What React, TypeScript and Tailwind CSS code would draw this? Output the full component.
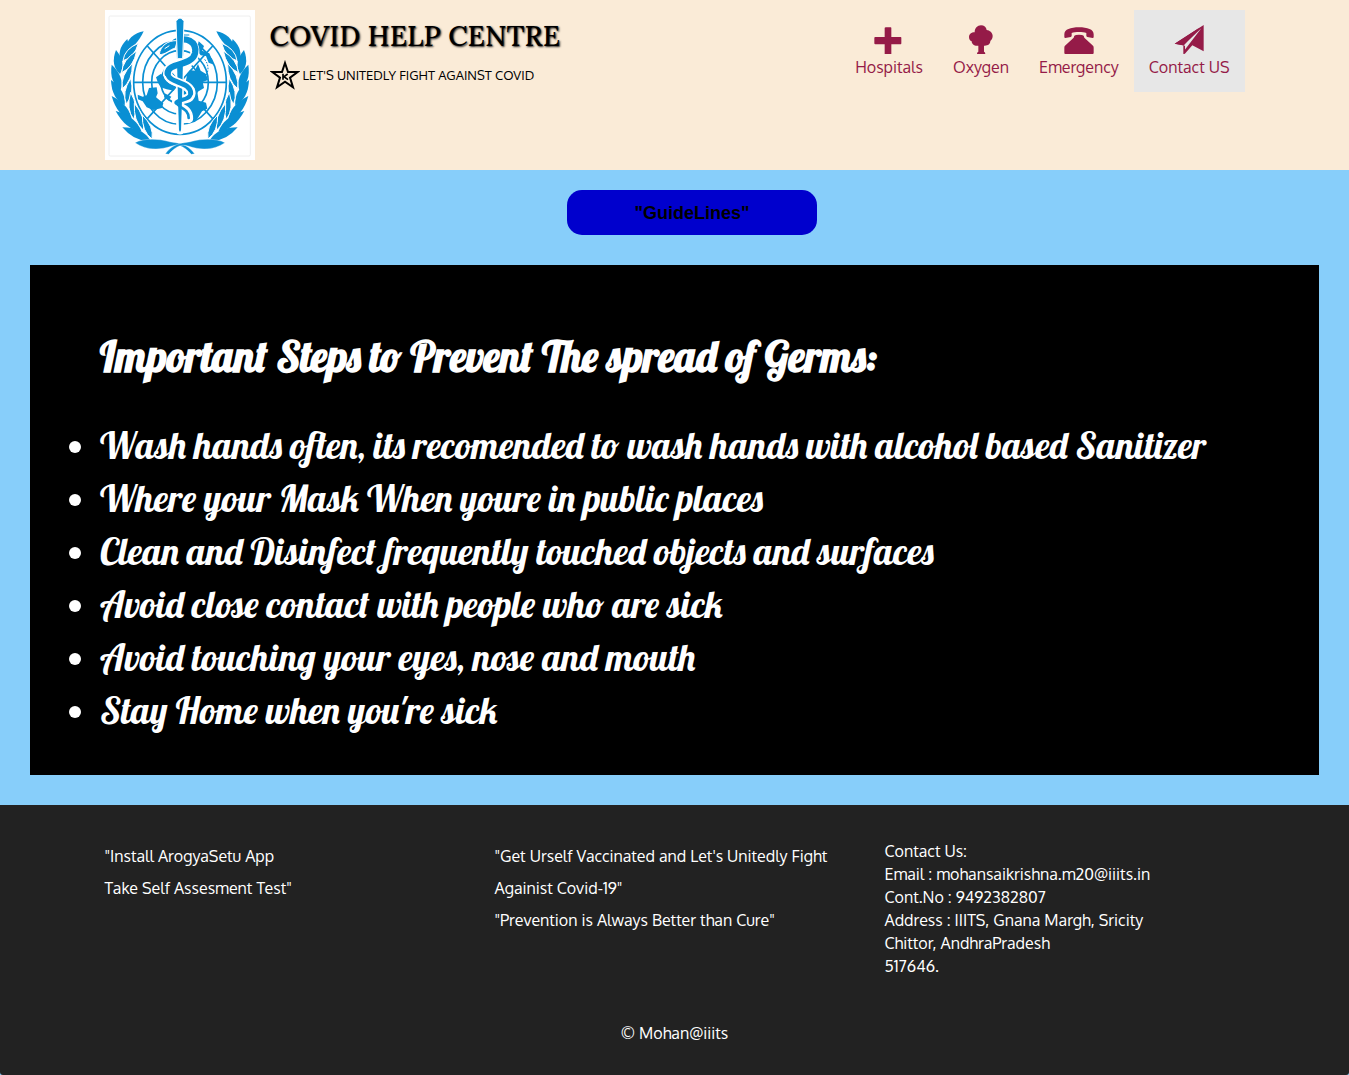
import type { ReactNode } from "react";

const BLUE = "#0a8fd3";

// Each pair of laurel leaves: stem point, outer tip, inner tip.
const LEAVES: number[][] = [
  [66, 186, 82, 117, 115, 130],
  [62, 222, 48, 150, 110, 153],
  [64, 270, 35, 194, 97, 190],
  [76, 316, 33, 240, 92, 235],
  [98, 362, 35, 288, 92, 277],
  [127, 395, 47, 333, 103, 310],
  [153, 421, 67, 382, 127, 345],
];

function leaf(x1: number, y1: number, x2: number, y2: number, w: number) {
  const dx = x2 - x1;
  const dy = y2 - y1;
  const l = Math.hypot(dx, dy);
  const mx = x1 + dx * 0.42;
  const my = y1 + dy * 0.42;
  const px = (-dy / l) * w;
  const py = (dx / l) * w;
  return `M${x1} ${y1}Q${mx + px} ${my + py} ${x2} ${y2}Q${mx - px} ${my - py} ${x1} ${y1}Z`;
}

function Laurel() {
  return (
    <g fill={BLUE}>
      <path d="M131 94C104 98 78 118 76 151C98 144 118 124 131 94Z" />
      {LEAVES.map(([x, y, ox, oy, ix, iy]) => (
        <g key={y}>
          <path d={leaf(x - 2, y, ox, oy, 25)} />
          <path d={leaf(x + 3, y - 4, ix, iy, 20)} stroke="#fff" strokeWidth="3" />
        </g>
      ))}
      <path d="M105 428C132 414 176 416 204 424C228 431 254 424 284 461L274 463C252 438 236 432 216 438C176 452 136 450 105 428Z" stroke="#fff" strokeWidth="1" />
    </g>
  );
}

function Emblem() {
  return (
    <svg viewBox="15 30 450 450" className="size-[150px] shrink-0 bg-white" role="img" aria-label="World Health Organization emblem">
      <rect x="27" y="48" width="424" height="420" rx="4" fill="none" stroke="#eeeeee" strokeWidth="3" />
      <g fill="none" stroke={BLUE} strokeWidth="5">
        <ellipse cx="240" cy="247" rx="139" ry="156" />
        <ellipse cx="240" cy="247" rx="112" ry="126" />
        <ellipse cx="240" cy="247" rx="85" ry="95" />
        <ellipse cx="240" cy="247" rx="57" ry="64" />
        <path d="M101 247H379M142 138L338 356M338 138L142 356" />
      </g>
      <g fill={BLUE}>
        <path d="M113 284L128 290L140 286L147 264L170 262L173 280L168 292L190 310L186 324L160 330L140 322L128 304L114 298Z" />
        <path d="M168 232L182 222L196 230L206 246L226 256L222 272L200 268L182 262L174 248Z" />
        <path d="M262 220L270 210L284 212L294 192L302 212L318 222L324 240L308 246L312 264L292 276L296 302L318 308L322 326L306 334L296 350L284 366L266 362L258 340L246 330L244 280L254 262Z" />
        <path d="M296 124L312 138L306 152L328 160L342 194L326 188L318 168L302 166L290 150Z" />
        <path d="M194 280L214 290L206 302L192 292Z" />
      </g>
      <path d="M314 178C328 196 326 214 316 232" fill="none" stroke={BLUE} strokeWidth="3" strokeDasharray="5 4" />
      <g fill="none" strokeLinecap="round">
        <path d="M215 134C252 104 290 124 284 162C278 206 204 184 203 220C203 252 274 246 273 280C272 306 229 292 229 310C230 326 266 320 266 356" stroke="#fff" strokeWidth="27" />
        <path d="M240 60V392" stroke="#fff" strokeWidth="23" />
      </g>
      <path d="M228 64Q240 44 252 64L246 300L243 390Q240 400 237 390L234 300Z" fill={BLUE} />
      <g fill="none" strokeLinecap="round">
        <path d="M252 180C226 190 203 196 203 220C203 252 273 244 273 280" stroke="#fff" strokeWidth="26" />
        <path d="M226 126C256 108 292 124 285 160C276 200 203 186 203 220" stroke={BLUE} strokeWidth="19" />
        <path d="M203 218C203 252 272 242 272 280" stroke={BLUE} strokeWidth="15" />
        <path d="M272 280C271 302 236 296 229 308" stroke={BLUE} strokeWidth="12" />
        <path d="M228 306C232 324 266 322 266 354" stroke={BLUE} strokeWidth="8" />
      </g>
      <path d="M178 164C180 138 204 120 232 122L226 144C210 148 198 164 178 164Z" fill={BLUE} stroke="#fff" strokeWidth="3" />
      <path d="M194 146L208 137" stroke="#fff" strokeWidth="3" />
      <path d="M228 64Q240 44 252 64L248 176H232Z" fill={BLUE} stroke="#fff" strokeWidth="3" />
      <path d="M252 105H268" stroke={BLUE} strokeWidth="3" />
      <Laurel />
      <g transform="matrix(-1 0 0 1 480 0)">
        <Laurel />
      </g>
    </svg>
  );
}

function StarMark() {
  return (
    <svg viewBox="0 0 90 90" className="size-[30px] shrink-0" aria-hidden="true">
      <path d="M45 9L54 36H83L60 53L69 82L45 65L21 82L30 53L7 36H36Z" fill="none" stroke="#000" strokeWidth="6" />
      <path d="M39 41V59M53 42L42 50L54 59" fill="none" stroke="#000" strokeWidth="5" />
    </svg>
  );
}

function NavLink({ label, active = false, children }: { label: string; active?: boolean; children: ReactNode }) {
  return (
    <a
      href="#"
      className={`flex flex-col items-center px-[15px] pt-[15px] pb-[13px] text-[16px] leading-[24px] text-[#951b48] ${active ? "bg-[#e7e7e7]" : ""}`}
    >
      <svg viewBox="0 0 90 90" className="size-[30px]" fill="currentColor" aria-hidden="true">
        {children}
      </svg>
      {label}
    </a>
  );
}

const STEPS = [
  "Wash hands often, its recomended to wash hands with alcohol based Sanitizer",
  "Where your Mask When youre in public places",
  "Clean and Disinfect frequently touched objects and surfaces",
  "Avoid close contact with people who are sick",
  "Avoid touching your eyes, nose and mouth",
  "Stay Home when you're sick",
];

export default function App() {
  return (
    <div className="bg-[#87cefa] font-['Oxygen','Open_Sans',sans-serif] text-[16px]">
      <header className="bg-[#faebd7] py-[10px]">
        <div className="mx-auto flex max-w-[1170px] items-start px-[15px]">
          <a href="#">
            <Emblem />
          </a>
          <div className="ml-[15px] pt-[8px]">
            <h1 className="font-['Lora','Liberation_Serif',serif] text-[28px] leading-[36px] font-medium text-black [text-shadow:1px_1px_2px_#222]">
              COVID HELP CENTRE
            </h1>
            <p className="mt-[6px] flex items-center gap-[3px] text-[13px] leading-[30px] text-black">
              <StarMark />
              LET'S UNITEDLY FIGHT AGAINST COVID
            </p>
          </div>
          <nav className="ml-auto flex">
            <NavLink label="Hospitals">
              <path d="M36 7H50Q52 7 52 9V36H80Q82 36 82 38V55Q82 58 80 58H52V87H32V58H4Q1 58 1 55V38Q1 36 4 36H32V9Q32 7 36 7Z" />
            </NavLink>
            <NavLink label="Oxygen">
              <path d="M45 1C54 1 61 7 62 15C71 16 80 23 80 33C80 40 77 45 73 48C73 57 65 63 54 62V80Q58 81 58 87H33Q33 81 37 80V62C26 64 17 58 17 49C12 47 9 42 9 36C9 28 16 22 26 22C26 10 34 1 45 1Z" />
            </NavLink>
            <NavLink label="Emergency">
              <path d="M1 28C1 13 20 7 45 7C70 7 89 13 89 28V36Q89 39 86 39L70 36Q67 35 67 32V24C57 20 33 20 23 24V32Q23 35 20 36L4 39Q1 39 1 36Z" />
              <path d="M31 32Q34 29 45 29Q56 29 59 32L61 38L87 62Q89 64 89 68V84Q89 87 86 87H4Q1 87 1 84V68Q1 64 3 62L29 38Z" />
            </NavLink>
            <NavLink label="Contact US" active>
              <path d="M89 0V79L55 61L32 87V75L82 10L30 59L28 61L2 56Z" />
              <path d="M2 56L76 8L28 62V87L33 86V62Z" />
            </NavLink>
          </nav>
        </div>
      </header>

      <main className="p-[30px] pt-[20px]">
        <div className="flex justify-center pl-[35px]">
          <button
            type="button"
            className="h-[45px] w-[250px] rounded-[15px] bg-[#0000cd] pt-[2px] font-['Liberation_Sans',sans-serif] text-[18px] font-bold text-black"
          >
            "GuideLines"
          </button>
        </div>
        <section className="mt-[30px] bg-black pt-[62px] pr-[30px] pb-[38px] pl-[70px] font-['Lobster','Liberation_Serif',serif] text-white">
          <h2 className="text-[42px] leading-[60px] font-bold">Important Steps to Prevent The spread of Germs:</h2>
          <ul className="mt-[32px] list-disc text-[37px] leading-[53px]">
            {STEPS.map((s) => (
              <li key={s}>{s}</li>
            ))}
          </ul>
        </section>
      </main>

      <footer className="rounded-b-[3px] bg-[#222] pt-[35px] pb-[30px] text-white">
        <div className="mx-auto grid max-w-[1170px] grid-cols-3">
          <p className="px-[15px] leading-[32px]">
            "Install ArogyaSetu App
            <br />
            Take Self Assesment Test"
          </p>
          <p className="px-[15px] leading-[32px]">
            "Get Urself Vaccinated and Let's Unitedly Fight
            <br />
            Againist Covid-19"
            <br />
            "Prevention is Always Better than Cure"
          </p>
          <address className="px-[15px] leading-[23px] not-italic">
            Contact Us:
            <br />
            Email : mohansaikrishna.m20@iiits.in
            <br />
            Cont.No : 9492382807
            <br />
            Address : IIITS, Gnana Margh, Sricity
            <br />
            Chittor, AndhraPradesh
            <br />
            517646.
          </address>
        </div>
        <p className="mt-[44px] text-center leading-[23px]">© Mohan@iiits</p>
      </footer>
    </div>
  );
}
